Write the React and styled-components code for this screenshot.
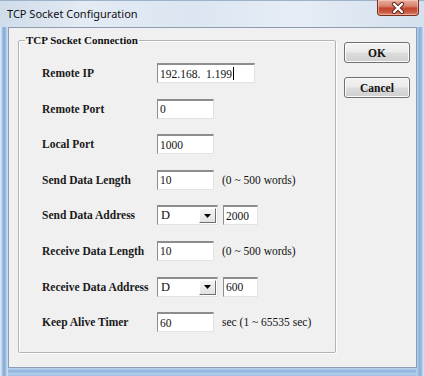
import React from "react";
import styled, { createGlobalStyle } from "styled-components";

const GlobalStyle = createGlobalStyle`
  html, body {
    margin: 0;
    padding: 0;
    background: #ffffff;
  }
`;

const rows = [
  { label: "Remote IP", value: "192.168.  1.199", width: 98, caret: true },
  { label: "Remote Port", value: "0" },
  { label: "Local Port", value: "1000" },
  { label: "Send Data Length", value: "10", hint: "(0 ~ 500 words)" },
  { label: "Send Data Address", device: "D", value: "2000" },
  { label: "Receive Data Length", value: "10", hint: "(0 ~ 500 words)" },
  { label: "Receive Data Address", device: "D", value: "600" },
  { label: "Keep Alive Timer", value: "60", hint: "sec (1 ~ 65535 sec)" },
];

const App = () => {
  return (
    <>
      <GlobalStyle />
      <Window>
        <TitleBar>
          <Title>TCP Socket Configuration</Title>
          <CloseButton>
            <svg width="14" height="12" viewBox="0 0 14 12">
              <path
                d="M3 2 L11 10 M11 2 L3 10"
                stroke="#5a2418"
                strokeWidth="4.2"
                strokeLinecap="round"
                fill="none"
              />
              <path
                d="M3 2 L11 10 M11 2 L3 10"
                stroke="#ffffff"
                strokeWidth="2.4"
                strokeLinecap="round"
                fill="none"
              />
            </svg>
          </CloseButton>
        </TitleBar>
        <Frame>
          <Client>
            <GroupBox>
              <Legend>TCP Socket Connection</Legend>
              <Form>
                {rows.map((row) => (
                  <Row key={row.label}>
                    <Label>{row.label}</Label>
                    <Fields>
                      {row.device ? (
                        <>
                          <ComboBox>
                            <span>{row.device}</span>
                            <DropButton>
                              <svg width="7" height="4" viewBox="0 0 7 4">
                                <path d="M0 0 H7 L3.5 4 Z" fill="#000" />
                              </svg>
                            </DropButton>
                          </ComboBox>
                          <TextBox $width={35}>{row.value}</TextBox>
                        </>
                      ) : (
                        <TextBox $width={row.width || 57}>
                          {row.value}
                          {row.caret && <Caret />}
                        </TextBox>
                      )}
                      {row.hint && <Hint>{row.hint}</Hint>}
                    </Fields>
                  </Row>
                ))}
              </Form>
            </GroupBox>
            <ButtonColumn>
              <DialogButton type="button">OK</DialogButton>
              <DialogButton type="button">Cancel</DialogButton>
            </ButtonColumn>
          </Client>
        </Frame>
      </Window>
    </>
  );
};

const Window = styled.div`
  width: 424px;
  height: 376px;
  display: flex;
  flex-direction: column;
  background: #b7cfe9;
  overflow: hidden;
`;

const TitleBar = styled.div`
  height: 27px;
  flex: none;
  display: flex;
  justify-content: space-between;
  align-items: flex-start;
  padding: 0 5px 0 7px;
  box-sizing: border-box;
  background: linear-gradient(
    to right,
    #cfdcea 0%,
    #e3ebf4 20%,
    #dbe6f2 45%,
    #e6edf5 70%,
    #d3e0ee 100%
  );
  border-top: 1px solid #9fb3c8;
`;

const Title = styled.div`
  font-family: "Noto Sans", "DejaVu Sans", sans-serif;
  font-size: 11px;
  color: #111;
  line-height: 26px;
`;

const CloseButton = styled.div`
  width: 42px;
  height: 16px;
  margin-top: -1px;
  display: flex;
  align-items: center;
  justify-content: center;
  box-sizing: border-box;
  border: 1px solid #7c2b1c;
  border-top: none;
  border-radius: 0 0 4px 4px;
  background: linear-gradient(
    to bottom,
    #e9ab9c 0%,
    #d98672 40%,
    #c4452e 55%,
    #c85a42 80%,
    #dc8a6c 100%
  );
  box-shadow: inset 0 0 0 1px rgba(255, 220, 210, 0.5);
`;

const Frame = styled.div`
  flex: 1;
  display: flex;
  padding: 0 7px 8px 8px;
  background:
    linear-gradient(to right, #e6eef7 0, #b2cdea 2px, #7ea6d4 4px, #a8c5e6 6px, #d9e5f1 8px) left top / 8px 100% no-repeat,
    linear-gradient(to left, #dfe9f4 0, #a9c7e8 2px, #85acd8 4px, #b4cfeb 7px) right top / 8px 100% no-repeat,
    linear-gradient(to bottom, #c2d7ee 0, #8cb2de 3px, #b7d0ec 6px, #9cbce2 8px) left bottom / 100% 8px no-repeat,
    #b7cfe9;
`;

const Client = styled.div`
  flex: 1;
  display: flex;
  align-items: flex-start;
  gap: 8px;
  padding: 5px 6px 0 9px;
  background: #f0f0f0;
  border: 1px solid #8c9db2;
  box-sizing: border-box;
`;

const GroupBox = styled.fieldset`
  width: 318px;
  height: 320px;
  margin: 0;
  padding: 0;
  box-sizing: border-box;
  border: 1px solid #b3b3b3;
  border-radius: 2px;
  box-shadow: inset 1px 1px 0 #ffffff, 1px 1px 0 #ffffff;
`;

const Legend = styled.legend`
  margin-left: 6px;
  padding: 0 1px;
  font-family: "Liberation Serif", "Times New Roman", serif;
  font-weight: bold;
  font-size: 11px;
  line-height: 14px;
  color: #111;
`;

const Form = styled.div`
  display: grid;
  grid-auto-rows: 20px;
  row-gap: 15.6px;
  padding: 16px 0 0 23px;
`;

const Row = styled.div`
  display: grid;
  grid-template-columns: 115px 1fr;
  align-items: center;
`;

const Label = styled.div`
  font-family: "Liberation Serif", "Times New Roman", serif;
  font-weight: bold;
  font-size: 11.5px;
  color: #1a1a1a;
  white-space: nowrap;
`;

const Fields = styled.div`
  display: flex;
  align-items: center;
  gap: 5px;
  height: 20px;
`;

const TextBox = styled.div`
  width: ${(p) => p.$width}px;
  height: 20px;
  box-sizing: border-box;
  display: flex;
  align-items: center;
  padding-left: 2px;
  background: #ffffff;
  border-top: 2px solid #8d8d8d;
  border-left: 1px solid #8d8d8d;
  border-right: 1px solid #e3e3e3;
  border-bottom: 1px solid #e3e3e3;
  font-family: "Liberation Serif", "Times New Roman", serif;
  font-size: 11.5px;
  color: #111;
  white-space: pre;
`;

const Caret = styled.span`
  width: 1px;
  height: 13px;
  margin-left: 1px;
  background: #000;
`;

const ComboBox = styled(TextBox).attrs({ $width: 61 })`
  justify-content: space-between;
  padding: 0 1px 0 3px;
  font-size: 12.5px;
`;

const DropButton = styled.div`
  width: 17px;
  height: 15px;
  display: flex;
  align-items: center;
  justify-content: center;
  box-sizing: border-box;
  background: linear-gradient(to bottom, #f4f4f4, #e2e2e2);
  border-top: 1px solid #ffffff;
  border-left: 1px solid #ffffff;
  border-right: 1px solid #6f6f6f;
  border-bottom: 1px solid #6f6f6f;
`;

const Hint = styled.span`
  margin-left: 3px;
  font-family: "Liberation Serif", "Times New Roman", serif;
  font-size: 11.5px;
  color: #111;
  white-space: nowrap;
`;

const ButtonColumn = styled.div`
  display: flex;
  flex-direction: column;
  gap: 14px;
  padding-top: 9px;
`;

const DialogButton = styled.button`
  width: 66px;
  height: 21px;
  padding: 0;
  border: 1px solid #707070;
  border-radius: 3px;
  background: linear-gradient(
    to bottom,
    #f3f3f3 0%,
    #ebebeb 48%,
    #dddddd 52%,
    #cfcfcf 100%
  );
  box-shadow: inset 0 0 0 1px #fbfbfb;
  font-family: "Liberation Serif", "Times New Roman", serif;
  font-weight: bold;
  font-size: 11.5px;
  color: #111;
`;

export default App;
